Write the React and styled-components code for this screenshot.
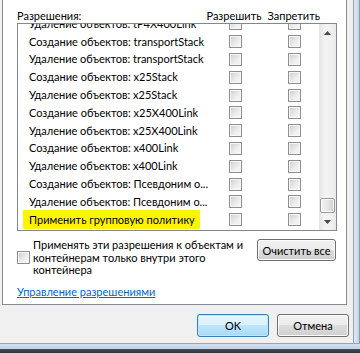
import React from 'react';
import styled, { createGlobalStyle } from 'styled-components';

const GlobalStyle = createGlobalStyle`
  html, body {
    margin: 0;
    padding: 0;
    background: #f0f0f0;
  }
  body {
    font-family: Lato, "Liberation Sans", sans-serif;
    font-size: 11px;
    color: #000;
  }
`;

const Window = styled.div`
  width: 360px;
  height: 353px;
  display: flex;
  flex-direction: column;
  overflow: hidden;
`;

const Middle = styled.div`
  display: flex;
  height: 343px;
`;

const Client = styled.div`
  width: 353px;
  box-sizing: border-box;
  padding-left: 2px;
  background: #f0f0f0;
  display: flex;
  flex-direction: column;
`;

const FrameRight = styled.div`
  flex: 1;
  background: linear-gradient(to right, #9aa3ad 0 1px, #dfe9f5 1px, #cbdaec 5px, #b8cbe2 6px, #8c9aab 6px);
`;

const FrameBottom = styled.div`
  height: 10px;
  background: linear-gradient(to bottom, #9aa5b2 0 1px, #d3e0ef 1px, #bfd2e9 6px, #49505a 6px, #2f3338);
`;

const Panel = styled.div`
  height: 305px;
  margin-right: 6px;
  box-sizing: border-box;
  background: #fff;
  border: 1px solid #898c95;
  border-top: none;
  padding: 8px 9px 0 14px;
  display: flex;
  flex-direction: column;
`;

const Header = styled.div`
  display: flex;
  align-items: center;
  height: 15px;
  line-height: 15px;
  padding-right: 17px;
  white-space: nowrap;
`;

const HeaderLabel = styled.span`
  flex: 1;
`;

const ColumnTitle = styled.span`
  margin-left: ${p => p.$gap || 0}px;
`;

const ListBox = styled.div`
  height: 208px;
  box-sizing: border-box;
  border: 1px solid #828790;
  display: flex;
  overflow: hidden;
`;

const Rows = styled.div`
  flex: 1;
  overflow: hidden;
`;

const RowsInner = styled.div`
  margin-top: -9px;
`;

const Row = styled.div`
  height: 17.8px;
  display: flex;
  align-items: center;
  padding: 0 18px 0 11px;
  white-space: nowrap;
`;

const RowText = styled.span`
  flex: 1;
  min-width: 0;
  line-height: 16px;
`;

const Marker = styled.span`
  background: #faf600;
  padding: 3px 5px 3px 6px;
  margin-left: -6px;
  border-radius: 1px;
`;

const Check = styled.span`
  display: inline-block;
  width: 13px;
  height: 13px;
  margin-left: ${p => p.$gap || 0}px;
  box-sizing: border-box;
  border: 1px solid #8f8f8f;
  background: linear-gradient(135deg, #cdcdcd, #eeeeee 60%, #f8f8f8);
  box-shadow: inset 0 0 0 1px #f6f6f6;
  flex-shrink: 0;
`;

const ScrollBar = styled.div`
  width: 17px;
  display: flex;
  flex-direction: column;
  background: linear-gradient(to right, #e4e4e4, #f3f3f3 35%, #f1f1f1 70%, #e9e9e9);
`;

const ScrollArrow = styled.div`
  height: 17px;
  display: flex;
  align-items: center;
  justify-content: center;
`;

const Track = styled.div`
  flex: 1;
  display: flex;
  flex-direction: column;
  justify-content: flex-end;
`;

const Thumb = styled.div`
  height: 15px;
  margin: 0 1px;
  box-sizing: border-box;
  border: 1px solid #9a9a9a;
  border-radius: 2px;
  background: linear-gradient(to right, #f3f3f3, #e6e6e6 50%, #cfcfcf);
  box-shadow: inset 0 0 0 1px #fbfbfb;
`;

const Options = styled.div`
  display: flex;
  justify-content: space-between;
  align-items: flex-start;
  margin-top: 8px;
`;

const OptionLabel = styled.label`
  display: flex;
  align-items: center;
  gap: 3px;
`;

const OptionText = styled.span`
  line-height: 12.5px;
  white-space: nowrap;
`;

const Button = styled.button`
  font-family: inherit;
  font-size: 11px;
  color: #000;
  white-space: nowrap;
  width: ${p => p.$w}px;
  height: ${p => p.$h || 23}px;
  margin-right: ${p => p.$mr || 0}px;
  padding: 0;
  border-radius: 3px;
  border: 1px solid ${p => (p.$primary ? '#3c7fb1' : '#707070')};
  background: ${p =>
    p.$primary
      ? 'linear-gradient(to bottom, #eaf6fd, #d9f0fc 50%, #bee6fd 50%, #a7d9f5)'
      : 'linear-gradient(to bottom, #f2f2f2, #ebebeb 50%, #dddddd 50%, #cfcfcf)'};
  box-shadow: inset 0 0 0 1px ${p => (p.$primary ? '#c4e5f6' : '#fcfcfc')};
`;

const Link = styled.a`
  display: block;
  margin-top: 7px;
  line-height: 15px;
  color: #0066cc;
  text-decoration: underline;
  align-self: flex-start;
`;

const Footer = styled.div`
  display: flex;
  justify-content: flex-end;
  gap: 8px;
  padding: 9px 4px 0 0;
`;

const rows = [
  'Удаление объектов: tP4X400Link',
  'Создание объектов: transportStack',
  'Удаление объектов: transportStack',
  'Создание объектов: x25Stack',
  'Удаление объектов: x25Stack',
  'Создание объектов: x25X400Link',
  'Удаление объектов: x25X400Link',
  'Создание объектов: x400Link',
  'Удаление объектов: x400Link',
  'Создание объектов: Псевдоним о...',
  'Удаление объектов: Псевдоним о...',
];

function Arrow({ up }) {
  return (
    <svg width="7" height="4" viewBox="0 0 7 4">
      <path d={up ? 'M0 4 L3.5 0 L7 4 Z' : 'M0 0 L7 0 L3.5 4 Z'} fill="#4a4a4a" />
    </svg>
  );
}

export default function App() {
  return (
    <Window>
      <GlobalStyle />
      <Middle>
        <Client>
          <Panel>
            <Header>
              <HeaderLabel>Разрешения:</HeaderLabel>
              <ColumnTitle>Разрешить</ColumnTitle>
              <ColumnTitle $gap={6}>Запретить</ColumnTitle>
            </Header>
            <ListBox>
              <Rows>
                <RowsInner>
                  {rows.map((r, i) => (
                    <Row key={i}>
                      <RowText>{r}</RowText>
                      <Check />
                      <Check $gap={46} />
                    </Row>
                  ))}
                  <Row>
                    <RowText>
                      <Marker>Применить групповую политику</Marker>
                    </RowText>
                    <Check />
                    <Check $gap={46} />
                  </Row>
                </RowsInner>
              </Rows>
              <ScrollBar>
                <ScrollArrow><Arrow up /></ScrollArrow>
                <Track><Thumb /></Track>
                <ScrollArrow><Arrow /></ScrollArrow>
              </ScrollBar>
            </ListBox>
            <Options>
              <OptionLabel>
                <Check />
                <OptionText>
                  Применять эти разрешения к объектам и<br />
                  контейнерам только внутри этого<br />
                  контейнера
                </OptionText>
              </OptionLabel>
              <Button $w={79} $h={22} $mr={1}>Очистить все</Button>
            </Options>
            <Link>Управление разрешениями</Link>
          </Panel>
          <Footer>
            <Button $primary $w={72}>OK</Button>
            <Button $w={72}>Отмена</Button>
          </Footer>
        </Client>
        <FrameRight />
      </Middle>
      <FrameBottom />
    </Window>
  );
}
